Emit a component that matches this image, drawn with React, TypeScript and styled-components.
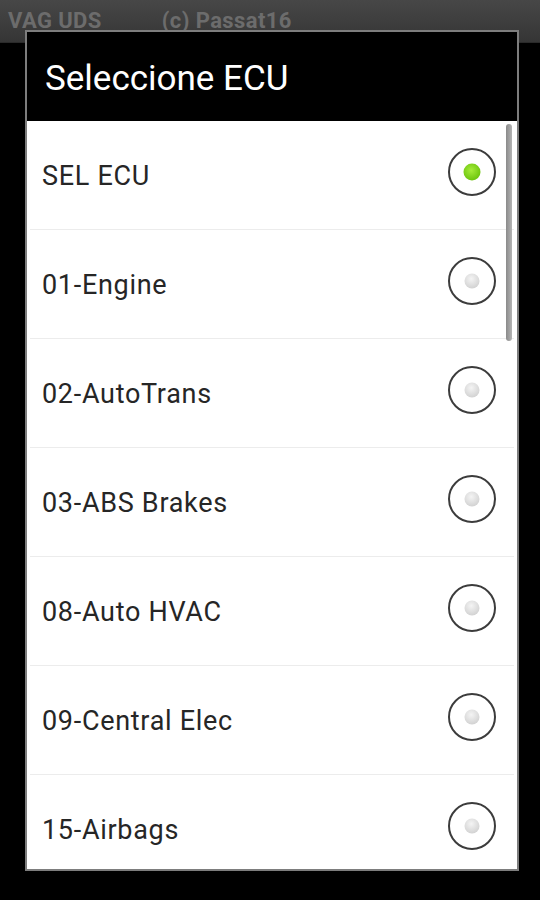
import * as React from 'react';
import styled, { createGlobalStyle } from 'styled-components';

const GlobalStyle = createGlobalStyle`
  html, body {
    margin: 0;
    padding: 0;
    background: #000;
    font-family: Roboto, 'Noto Sans', sans-serif;
  }
`;

const Screen = styled.div`
  position: relative;
  width: 540px;
  height: 900px;
  overflow: hidden;
  background: #000;
`;

const ActionBar = styled.div`
  display: flex;
  align-items: flex-start;
  height: 43px;
  padding: 9px 0 0 8px;
  box-sizing: border-box;
  background: linear-gradient(#474747, #353535);
  border-bottom: 1px solid #2a2a2a;
`;

const BarText = styled.span<{ $gap?: number }>`
  margin-left: ${(p) => p.$gap || 0}px;
  font-size: 22px;
  font-weight: bold;
  letter-spacing: 0.4px;
  color: #6c6c6c;
  line-height: 24px;
`;

const Dialog = styled.div`
  position: absolute;
  top: 30px;
  left: 25px;
  width: 494px;
  height: 841px;
  box-sizing: border-box;
  border: 2px solid #7d7d7d;
  background: #fff;
  display: flex;
  flex-direction: column;
`;

const Header = styled.div`
  height: 89px;
  flex-shrink: 0;
  background: #000;
  display: flex;
  align-items: center;
  padding-left: 18px;
  box-sizing: border-box;
`;

const Title = styled.h1`
  margin: 4px 0 0;
  font-size: 35px;
  font-weight: normal;
  color: #fff;
`;

const List = styled.ul`
  position: relative;
  flex: 1;
  margin: 0;
  padding: 0;
  overflow: hidden;
  list-style: none;
`;

const Row = styled.li<{ $last?: boolean }>`
  height: 109px;
  margin: 0 3px;
  display: flex;
  align-items: center;
  justify-content: space-between;
  border-bottom: 1px solid ${(p) => (p.$last ? 'transparent' : '#ececec')};
  padding: 0 17px 0 12px;
  box-sizing: border-box;
`;

const Label = styled.span`
  font-size: 27px;
  letter-spacing: 0.7px;
  color: #262626;
  margin-top: 1px;
`;

const Scrollbar = styled.div`
  position: absolute;
  top: 3px;
  right: 5px;
  width: 6px;
  height: 217px;
  border-radius: 3px;
  background: linear-gradient(90deg, #8a8a8a, #b4b4b4);
`;

const Radio = ({ checked }: { checked: boolean }) => (
  <svg width="50" height="50" viewBox="0 0 50 50" style={{ marginTop: -6 }}>
    <defs>
      <radialGradient id="on" cx="45%" cy="40%" r="60%">
        <stop offset="0%" stopColor="#a6ec3a" />
        <stop offset="100%" stopColor="#6cc40e" />
      </radialGradient>
      <radialGradient id="off" cx="45%" cy="35%" r="65%">
        <stop offset="0%" stopColor="#f4f4f4" />
        <stop offset="100%" stopColor="#d2d2d2" />
      </radialGradient>
    </defs>
    <circle cx="25" cy="25" r="23" fill="#fff" stroke="#3c3c3c" strokeWidth="2" />
    <circle cx="25" cy="25" r={checked ? 8.5 : 7.5} fill={checked ? 'url(#on)' : 'url(#off)'} />
  </svg>
);

const ecus = [
  'SEL ECU',
  '01-Engine',
  '02-AutoTrans',
  '03-ABS Brakes',
  '08-Auto HVAC',
  '09-Central Elec',
  '15-Airbags',
];

export default function App() {
  return (
    <Screen>
      <GlobalStyle />
      <ActionBar>
        <BarText>VAG UDS</BarText>
        <BarText $gap={60}>(c) Passat16</BarText>
      </ActionBar>
      <Dialog>
        <Header>
          <Title>Seleccione ECU</Title>
        </Header>
        <List>
          {ecus.map((name, i) => (
            <Row key={name} $last={i === ecus.length - 1}>
              <Label>{name}</Label>
              <Radio checked={i === 0} />
            </Row>
          ))}
          <Scrollbar />
        </List>
      </Dialog>
    </Screen>
  );
}
